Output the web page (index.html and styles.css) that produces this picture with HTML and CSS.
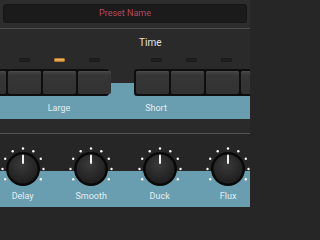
FILE: index.html
```html
<!DOCTYPE html>
<html>
<head>
<meta charset="utf-8">
<link rel="stylesheet" href="styles.css">
</head>
<body>
<div class="app">
<header class="header">
  <div class="preset">Preset Name</div>
</header>
<section class="section time-section">
  <div class="title">Time</div>
  <div class="row leds">
    <div class="group">
      <div class="cell"><span class="led"></span></div>
      <div class="cell"><span class="led"></span></div>
      <div class="cell"><span class="led on"></span></div>
      <div class="cell"><span class="led"></span></div>
    </div>
    <div class="group">
      <div class="cell"><span class="led"></span></div>
      <div class="cell"><span class="led"></span></div>
      <div class="cell"><span class="led"></span></div>
      <div class="cell"><span class="led"></span></div>
    </div>
  </div>
  <div class="strip button-strip">
    <div class="row">
      <div class="group buttons">
        <div class="btn"></div><div class="btn"></div><div class="btn"></div><div class="btn"></div>
      </div>
      <div class="group buttons">
        <div class="btn"></div><div class="btn"></div><div class="btn"></div><div class="btn"></div>
      </div>
    </div>
    <div class="row labels">
      <div class="group">
        <div class="cell"></div><div class="cell"></div><div class="cell">Large</div><div class="cell"></div>
      </div>
      <div class="group">
        <div class="cell">Short</div><div class="cell"></div><div class="cell"></div><div class="cell"></div>
      </div>
    </div>
  </div>
</section>
<section class="section knob-section">
  <div class="strip knob-strip">
    <div class="knob-row">
      <div class="knob-cell">
        <svg class="knob" width="48" height="44" viewBox="0 0 48 44"><use href="#knob"/></svg>
        <div class="klabel">Delay</div>
      </div>
      <div class="knob-cell">
        <svg class="knob" width="48" height="44" viewBox="0 0 48 44"><use href="#knob"/></svg>
        <div class="klabel">Smooth</div>
      </div>
      <div class="knob-cell">
        <svg class="knob" width="48" height="44" viewBox="0 0 48 44"><use href="#knob"/></svg>
        <div class="klabel">Duck</div>
      </div>
      <div class="knob-cell">
        <svg class="knob" width="48" height="44" viewBox="0 0 48 44"><use href="#knob"/></svg>
        <div class="klabel">Flux</div>
      </div>
    </div>
  </div>
</section>
</div>
<svg width="0" height="0" class="defs">
  <defs>
    <radialGradient id="kg" cx="0.45" cy="0.35" r="0.7">
      <stop offset="0" stop-color="#3a3a3a"/>
      <stop offset="1" stop-color="#1c1c1c"/>
    </radialGradient>
    <g id="knob">
      <g fill="#ffffff">
        <circle cx="24" cy="1.5" r="1.2"/>
        <circle cx="34.3" cy="4.3" r="1.2"/>
        <circle cx="41.8" cy="11.8" r="1.2"/>
        <circle cx="44.5" cy="22" r="1.2"/>
        <circle cx="41.8" cy="32.3" r="1.2"/>
        <circle cx="13.7" cy="4.3" r="1.2"/>
        <circle cx="6.2" cy="11.8" r="1.2"/>
        <circle cx="3.5" cy="22" r="1.2"/>
        <circle cx="6.2" cy="32.3" r="1.2"/>
      </g>
      <circle cx="24" cy="22" r="17" fill="#080808"/>
      <circle cx="24" cy="22" r="14.5" fill="url(#kg)"/>
      <line x1="24" y1="8.5" x2="24" y2="16" stroke="#f2f2f2" stroke-width="2" stroke-linecap="round"/>
    </g>
  </defs>
</svg>
</body>
</html>
```

FILE: styles.css
```css
html, body {
  margin: 0;
  padding: 0;
  overflow: hidden;
}
body {
  background: #262626;
  font-family: Roboto, "Liberation Sans", sans-serif;
}
.app {
  width: 250px;
  height: 224px;
  overflow: hidden;
  background: #262626;
}
.defs {
  position: absolute;
}
.header {
  background: #2d2d2d;
  padding: 4px 3px 5px;
  border-bottom: 1px solid #4e4e4e;
}
.preset {
  height: 17px;
  background: #1b1b1b;
  border: 1px solid #161616;
  border-radius: 3px;
  color: #b9485e;
  font-size: 9px;
  line-height: 17px;
  text-align: center;
}
.section {
  overflow: hidden;
}
.time-section {
  background: #2a2a2a;
  border-bottom: 1px solid #545454;
  padding-bottom: 14px;
}
.title {
  margin-top: 8px;
  height: 12px;
  line-height: 12px;
  font-size: 10px;
  color: #e2e2e2;
  padding-left: 139px;
}
.row {
  display: flex;
  gap: 25px;
  margin-left: -29.5px;
  width: 320px;
}
.group {
  display: flex;
  gap: 2px;
  padding: 0 2px;
  width: 138px;
  flex: none;
}
.cell {
  width: 33px;
  flex: none;
  display: flex;
  justify-content: center;
  white-space: nowrap;
}
.leds {
  margin-top: 9px;
  height: 4px;
}
.led {
  width: 11px;
  height: 4px;
  box-sizing: border-box;
  border-radius: 1px;
  background: #1f1f1f;
  border: 1px solid #1a1a1a;
}
.led.on {
  background: linear-gradient(#f3bd6a, #d9953a);
  border-color: #b67a2c;
}
.strip {
  background: linear-gradient(to bottom, transparent 14px, #699eb0 14px);
}
.button-strip {
  margin-top: 7px;
  padding-bottom: 5px;
}
.buttons {
  background: #0e0e0e;
  border-radius: 3px;
  padding: 1.5px 2px 2px;
  height: 27px;
  box-sizing: border-box;
}
.btn {
  width: 33px;
  flex: none;
  border-radius: 2px;
  background: linear-gradient(#444444, #363636 20%, #323232);
  box-shadow: inset 0 1px 0 #4a4a4a;
}
.labels {
  margin-top: 7px;
  height: 11px;
  line-height: 11px;
  font-size: 9px;
  color: #e4edf1;
}
.knob-section {
  background: #262626;
  padding-top: 13px;
}
.knob-strip {
  background: linear-gradient(to bottom, transparent 24px, #699eb0 24px);
  padding-bottom: 5px;
}
.knob-row {
  display: flex;
  margin-left: -11.6px;
  width: 290px;
}
.knob-cell {
  width: 68.5px;
  flex: none;
  display: flex;
  flex-direction: column;
  align-items: center;
}
.knob {
  display: block;
}
.klabel {
  height: 11px;
  line-height: 11px;
  font-size: 9px;
  color: #e4edf1;
  white-space: nowrap;
}
```
